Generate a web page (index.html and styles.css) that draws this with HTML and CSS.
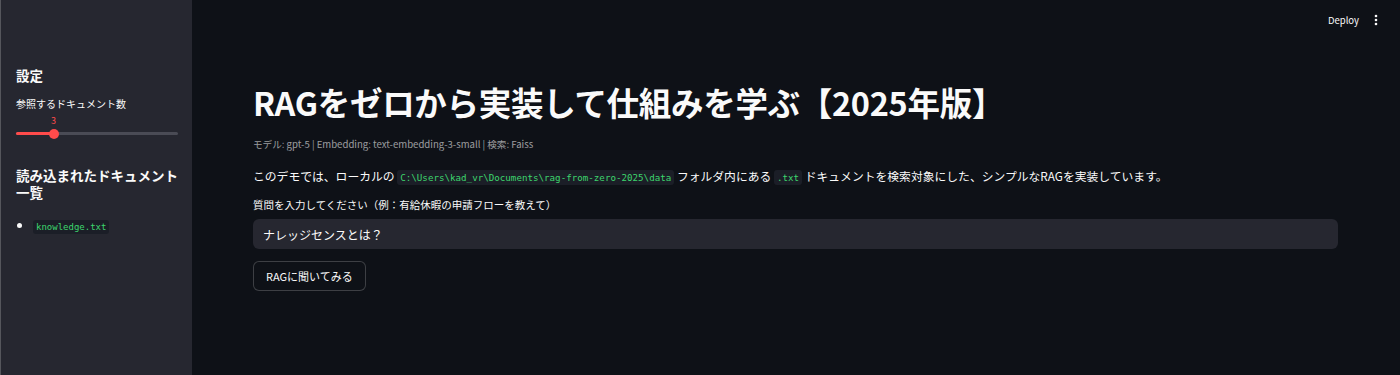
FILE: index.html
```html
<!DOCTYPE html>
<html lang="ja">
<head>
    <meta charset="UTF-8">
    <meta name="viewport" content="width=device-width, initial-scale=1.0">
    <title>RAG</title>
    <link rel="stylesheet" href="styles.css">
</head>
<body>
    <div class="app">
        <aside class="sidebar">
            <h2 class="side-title">設定</h2>
            <div class="slider">
                <div class="slider-label">参照するドキュメント数</div>
                <div class="slider-value">3</div>
                <div class="slider-track">
                    <div class="slider-fill"></div>
                    <div class="slider-thumb"></div>
                </div>
            </div>
            <h2 class="side-title docs-title">読み込まれたドキュメント一覧</h2>
            <ul class="doc-list">
                <li><code>knowledge.txt</code></li>
            </ul>
        </aside>
        <main class="main">
            <div class="toolbar">
                <span class="deploy">Deploy</span>
                <span class="menu">
                    <svg width="4" height="12" viewBox="0 0 4 12"><circle cx="2" cy="2" r="1.3" fill="#fafafa"/><circle cx="2" cy="6" r="1.3" fill="#fafafa"/><circle cx="2" cy="10" r="1.3" fill="#fafafa"/></svg>
                </span>
            </div>
            <div class="content">
                <h1>RAGをゼロから実装して仕組みを学ぶ【2025年版】</h1>
                <p class="caption">モデル: gpt-5 | Embedding: text-embedding-3-small | 検索: Faiss</p>
                <p class="intro">このデモでは、ローカルの <code>C:\Users\kad_vr\Documents\rag-from-zero-2025\data</code> フォルダ内にある <code>.txt</code> ドキュメントを検索対象にした、シンプルなRAGを実装しています。</p>
                <label class="input-label" for="question">質問を入力してください（例：有給休暇の申請フローを教えて）</label>
                <input type="text" id="question" class="text-input" value="ナレッジセンスとは？">
                <button class="ask-btn">RAGに聞いてみる</button>
            </div>
        </main>
    </div>
</body>
</html>
```

FILE: styles.css
```css
html, body {
    margin: 0;
    height: 100%;
}

body {
    font-family: "Noto Sans CJK JP", "Noto Sans", sans-serif;
    background-color: #0e1117;
    color: #fafafa;
}

.app {
    display: flex;
    height: 375px;
}

.sidebar {
    width: 192px;
    background-color: #262730;
    border-left: 1px solid #55565c;
    padding: 67px 8px 0 15px;
    box-sizing: border-box;
}

.side-title {
    font-size: 13.5px;
    font-weight: 700;
    line-height: 17px;
    margin: 0;
}

.slider {
    margin-top: 13px;
    margin-right: 6px;
}

.slider-label {
    font-size: 10px;
    line-height: 14px;
}

.slider-value {
    color: #ff4b4b;
    font-size: 9px;
    line-height: 12px;
    margin-top: 4px;
    padding-left: 35px;
}

.slider-track {
    position: relative;
    height: 3px;
    margin-top: 5px;
    border-radius: 2px;
    background-color: #4a4b55;
}

.slider-fill {
    width: 38px;
    height: 3px;
    border-radius: 2px;
    background-color: #ff4b4b;
}

.slider-thumb {
    position: absolute;
    left: 33px;
    top: -3.5px;
    width: 10px;
    height: 10px;
    border-radius: 50%;
    background-color: #ff4b4b;
}

.docs-title {
    margin-top: 32px;
}

.doc-list {
    margin: 15px 0 0 0;
    padding-left: 17px;
    font-size: 10px;
}

.doc-list li::marker {
    font-size: 12px;
}

code {
    font-family: "DejaVu Sans Mono", "Liberation Mono", monospace;
    font-size: 9px;
    color: #3dd56d;
    background-color: #1b1e27;
    padding: 2px 3px;
    border-radius: 3px;
}

.main {
    flex: 1;
    display: flex;
    flex-direction: column;
}

.toolbar {
    display: flex;
    justify-content: flex-end;
    align-items: center;
    height: 40px;
    padding-right: 22px;
    gap: 15px;
}

.deploy {
    font-size: 9.5px;
}

.menu {
    display: flex;
}

.content {
    padding: 0 62px 0 61px;
}

h1 {
    font-size: 32.5px;
    font-weight: 700;
    line-height: 44px;
    margin: 40px 0 0 0;
    letter-spacing: -0.3px;
}

.caption {
    font-size: 9.6px;
    color: rgba(250, 250, 250, 0.6);
    margin: 13px 0 0 0;
    line-height: 14px;
}

.intro {
    font-size: 11.8px;
    line-height: 17px;
    margin: 16px 0 0 0;
}

.intro code {
    font-size: 9.2px;
}

.input-label {
    display: block;
    font-size: 10.5px;
    line-height: 14px;
    margin-top: 12px;
}

.text-input {
    display: block;
    width: 100%;
    height: 30px;
    box-sizing: border-box;
    margin-top: 7px;
    padding: 0 10px;
    border: none;
    border-radius: 6px;
    background-color: #262730;
    color: #fafafa;
    font-family: inherit;
    font-size: 12px;
    outline: none;
}

.ask-btn {
    display: block;
    margin-top: 12px;
    height: 30px;
    padding: 0 12px;
    background-color: #0e1117;
    color: #fafafa;
    border: 1px solid rgba(250, 250, 250, 0.2);
    border-radius: 6px;
    font-family: inherit;
    font-size: 11px;
}
```
